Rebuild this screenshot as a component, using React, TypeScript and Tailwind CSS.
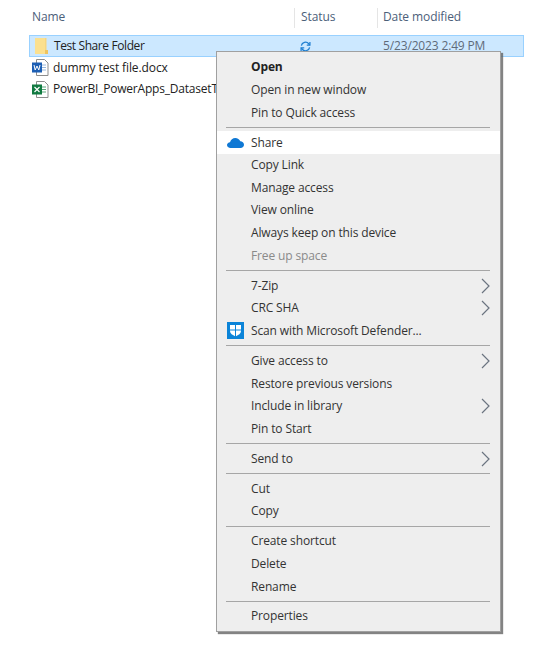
import React from "react";

const font = { fontFamily: '"Open Sans", "Noto Sans", sans-serif' };

function Row({ label, bold, disabled, active, arrow, icon }: { label: string; bold?: boolean; disabled?: boolean; active?: boolean; arrow?: boolean; icon?: React.ReactNode }) {
  return (
    <div className={`flex items-center h-[22.65px] ${active ? "bg-white" : ""}`}>
      <div className="w-[34px] flex justify-center pl-[3px] shrink-0">{icon}</div>
      <span className={`flex-1 text-[12px] tracking-[-0.13px] ${bold ? "font-bold text-[#222]" : disabled ? "text-[#8a8a8a]" : "text-[#333]"}`}>{label}</span>
      {arrow && (
        <svg width="9" height="16" viewBox="0 0 9 16" className="mr-[10px]">
          <path d="M1 1l7 7-7 7" fill="none" stroke="#6b7480" strokeWidth="1.2" />
        </svg>
      )}
    </div>
  );
}

const Sep = () => (
  <div className="h-[7.3px] flex items-center pl-[9px] pr-[10px]">
    <div className="h-px w-full bg-[#a6a6a6]" />
  </div>
);

const Cloud = () => (
  <svg width="17" height="10" viewBox="0 0 17 10">
    <path d="M3.5 10C1.5 10 0 8.700 0 7.100 0 5.500 1.300 4.300 3 4.200 3.700 1.800 5.700 0 8.300 0c2.300 0 4.200 1.300 5 3.300 1.900.1 3.700 1.500 3.700 3.500C17 8.700 15.500 10 13.500 10z" fill="#0f78d4" />
  </svg>
);

const Shield = () => (
  <svg width="17" height="17" viewBox="0 0 17 17">
    <rect width="17" height="17" fill="#0b84d8" />
    <path d="M3 3h11v6c0 2.500-2.500 4-5.500 5.500C5.500 13 3 11.500 3 9z" fill="#fff" />
    <path d="M8.500 3v12M3 8h11" stroke="#0b84d8" strokeWidth="1" />
  </svg>
);

const Folder = () => (
  <svg width="13" height="16" viewBox="0 0 13 16">
    <path d="M0 0h10v12h3v4H0z" fill="#fbe08f" />
    <path d="M10 0h1.500v12H10z" fill="#f6d681" />
    <path d="M10 12h3v4h-3z" fill="#eec45f" />
  </svg>
);

const Word = () => (
  <svg width="17" height="17" viewBox="0 0 17 17">
    <path d="M4.500.5h8l3.500 3.500v12.500h-11.500z" fill="#fff" stroke="#8d8d8d" />
    <path d="M10 6h4M10 8.500h4M10 11h4" stroke="#9ab8dc" />
    <rect y="3.500" width="10" height="10" fill="#1d5fb4" />
    <path d="M2 6l1.200 5 1.800-4 1.800 4L8 6" fill="none" stroke="#fff" strokeWidth="1" />
  </svg>
);

const Excel = () => (
  <svg width="17" height="17" viewBox="0 0 17 17">
    <path d="M4.500.5h8l3.500 3.500v12.500h-11.500z" fill="#fff" stroke="#8d8d8d" />
    <path d="M10 6h4M10 8.500h4M10 11h4" stroke="#5aa77c" />
    <rect y="3.500" width="10" height="10" fill="#117a41" />
    <path d="M2.500 6l5 5M7.500 6l-5 5" stroke="#fff" strokeWidth="1.200" />
  </svg>
);

const Sync = () => (
  <svg width="11" height="11" viewBox="0 0 12 12" fill="none" stroke="#1f7fd1" strokeWidth="1.400">
    <path d="M1.500 5a4.500 4.500 0 0 1 8-2l1 1.500" />
    <path d="M10.800 1v3.600H7.400" />
    <path d="M10.500 7a4.500 4.500 0 0 1-8 2l-1-1.500" />
    <path d="M1.200 11V7.400h3.400" />
  </svg>
);

export default function App() {
  return (
    <div className="relative w-[551px] h-[651px] bg-white overflow-hidden" style={font}>
      <div className="flex h-[20px] mt-[8px] text-[12px] text-[#4c607a] tracking-[-0.1px]">
        <span className="w-[294px] pl-[32px]">Name</span>
        <span className="w-[83px] h-full border-l border-[#e5e5e5] pl-[6px]">Status</span>
        <span className="h-full border-l border-[#e5e5e5] pl-[5px]">Date modified</span>
      </div>
      <div className="mt-[7px] ml-[29px] w-[495px] h-[22px] bg-[#cce8ff] border border-[#99d1ff] flex items-center text-[12px] text-[#222]">
        <div className="w-[24px] pl-[5px] flex"><Folder /></div>
        <span className="w-[245px] tracking-[-0.4px]">Test Share Folder</span>
        <div className="w-[84px] pl-[1px]"><Sync /></div>
        <span className="text-[#5f6b7a] tracking-[-0.15px]">5/23/2023 2:49 PM</span>
      </div>
      <div className="ml-[32px] h-[21.5px] flex items-center text-[12px] tracking-[-0.1px] text-[#222] gap-[4px]">
        <Word /><span>dummy test file.docx</span>
      </div>
      <div className="ml-[32px] h-[21.5px] flex items-center text-[12px] tracking-[-0.2px] text-[#222] gap-[4px]">
        <Excel /><span>PowerBI_PowerApps_DatasetT</span>
      </div>

      <div className="absolute left-[216px] top-[51px] w-[285px] h-[581px] bg-[#eeeeee] border border-[#a0a0a0] pt-[4px] shadow-[2px_2px_1px_rgba(90,90,90,0.75)]">
        <Row label="Open" bold />
        <Row label="Open in new window" />
        <Row label="Pin to Quick access" />
        <Sep />
        <Row label="Share" active icon={<Cloud />} />
        <Row label="Copy Link" />
        <Row label="Manage access" />
        <Row label="View online" />
        <Row label="Always keep on this device" />
        <Row label="Free up space" disabled />
        <Sep />
        <Row label="7-Zip" arrow />
        <Row label="CRC SHA" arrow />
        <Row label="Scan with Microsoft Defender..." icon={<Shield />} />
        <Sep />
        <Row label="Give access to" arrow />
        <Row label="Restore previous versions" />
        <Row label="Include in library" arrow />
        <Row label="Pin to Start" />
        <Sep />
        <Row label="Send to" arrow />
        <Sep />
        <Row label="Cut" />
        <Row label="Copy" />
        <Sep />
        <Row label="Create shortcut" />
        <Row label="Delete" />
        <Row label="Rename" />
        <Sep />
        <Row label="Properties" />
      </div>
    </div>
  );
}
